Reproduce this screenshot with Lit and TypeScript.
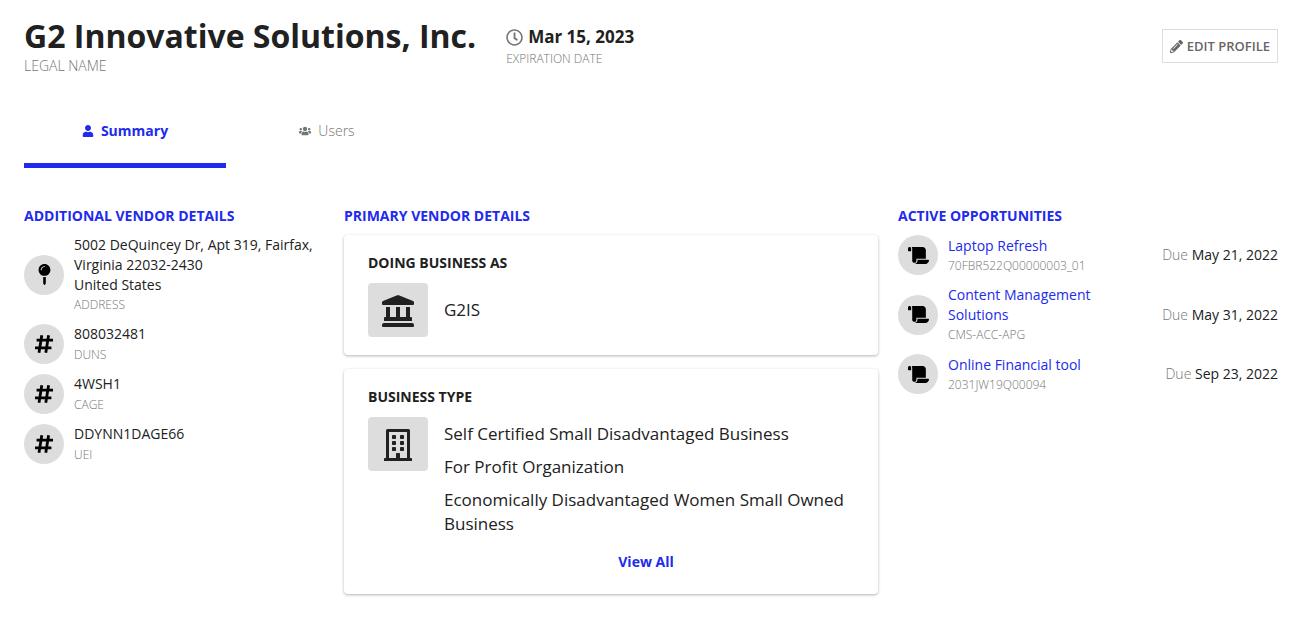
import { LitElement, html, css, svg } from "lit";
import { customElement, state } from "lit/decorators.js";

const icons = {
  user: svg`<svg viewBox="0 0 448 512" aria-hidden="true"><path d="M224 256c70.7 0 128-57.3 128-128S294.7 0 224 0 96 57.3 96 128s57.3 128 128 128zm89.6 32h-16.7c-22.2 10.2-46.9 16-72.9 16s-50.6-5.8-72.9-16h-16.7C60.2 288 0 348.2 0 422.4V464c0 26.5 21.5 48 48 48h352c26.5 0 48-21.5 48-48v-41.6c0-74.2-60.2-134.4-134.4-134.4z"/></svg>`,
  users: svg`<svg viewBox="0 0 640 512" aria-hidden="true"><path d="M96 224c35.3 0 64-28.7 64-64s-28.7-64-64-64-64 28.7-64 64 28.7 64 64 64zm448 0c35.3 0 64-28.7 64-64s-28.7-64-64-64-64 28.7-64 64 28.7 64 64 64zm32 32h-64c-17.6 0-33.5 7.1-45.1 18.6 40.3 22.1 68.9 62 75.1 109.4h66c17.7 0 32-14.3 32-32v-32c0-35.3-28.7-64-64-64zm-256 0c61.9 0 112-50.1 112-112S381.9 32 320 32 208 82.1 208 144s50.1 112 112 112zm76.8 32h-8.3c-20.8 10-43.9 16-68.5 16s-47.6-6-68.5-16h-8.3C179.6 288 128 339.6 128 403.2V432c0 26.5 21.5 48 48 48h288c26.5 0 48-21.5 48-48v-28.8c0-63.6-51.6-115.2-115.2-115.2zm-223.7-13.4C161.5 263.1 145.6 256 128 256H64c-35.3 0-64 28.7-64 64v32c0 17.7 14.3 32 32 32h65.9c6.3-47.4 34.9-87.3 75.2-109.4z"/></svg>`,
  clock: svg`<svg viewBox="0 0 512 512" aria-hidden="true"><path d="M256 8C119 8 8 119 8 256s111 248 248 248 248-111 248-248S393 8 256 8zm0 448c-110.5 0-200-89.5-200-200S145.5 56 256 56s200 89.5 200 200-89.5 200-200 200zm61.8-104.4l-84.9-61.7c-3.1-2.3-4.9-5.9-4.9-9.7V116c0-6.6 5.4-12 12-12h32c6.6 0 12 5.4 12 12v141.7l66.8 48.6c5.4 3.9 6.5 11.4 2.6 16.8L334.6 349c-3.9 5.3-11.4 6.5-16.8 2.6z"/></svg>`,
  pencil: svg`<svg viewBox="0 0 512 512" aria-hidden="true"><path d="M497.9 142.1l-46.1 46.1c-4.7 4.7-12.3 4.7-17 0l-111-111c-4.7-4.7-4.7-12.3 0-17l46.1-46.1c18.7-18.7 49.1-18.7 67.9 0l60.1 60.1c18.8 18.7 18.8 49.1 0 67.9zM284.2 99.8L21.6 362.4.4 483.9c-2.9 16.4 11.4 30.6 27.8 27.8l121.5-21.3 262.6-262.6c4.7-4.7 4.7-12.3 0-17l-111-111c-4.8-4.7-12.4-4.7-17.1 0zM124.1 339.9c-5.5-5.5-5.5-14.3 0-19.8l154-154c5.5-5.5 14.3-5.5 19.8 0s5.5 14.3 0 19.8l-154 154c-5.5 5.5-14.3 5.5-19.8 0zM88 424h48v36.3l-64.5 11.3-31.1-31.1L51.7 376H88v48z"/></svg>`,
  pin: svg`<svg viewBox="0 0 288 512" aria-hidden="true"><path d="M112 316.94v156.69l22.02 33.02c4.75 7.12 15.22 7.12 19.97 0L176 473.63V316.94c-10.39 1.92-21.06 3.06-32 3.06s-21.61-1.14-32-3.06zM144 0C64.47 0 0 64.47 0 144s64.47 144 144 144 144-64.47 144-144S223.53 0 144 0zm0 76c-37.5 0-68 30.5-68 68 0 6.62-5.38 12-12 12s-12-5.38-12-12c0-50.73 41.28-92 92-92 6.62 0 12 5.38 12 12s-5.38 12-12 12z"/></svg>`,
  hash: svg`<svg viewBox="0 0 21 21" aria-hidden="true"><path d="M7.800 1.300 5 18.700M14.600 1.300l-2.800 17.400M2.600 6.200h16.400M1 13.800h16.400" fill="none" stroke="currentColor" stroke-width="2.800"/></svg>`,
  scroll: svg`<svg viewBox="0 0 640 512" aria-hidden="true"><path d="M48 0C21.53 0 0 21.53 0 48v64c0 8.84 7.16 16 16 16h80V48C96 21.53 74.47 0 48 0zm208 412.57V352h288V96c0-52.94-43.06-96-96-96H111.59C121.74 13.41 128 29.92 128 48v368c0 38.87 34.65 69.65 74.75 63.12C234.22 474 256 444.46 256 412.57zM288 384v32c0 52.93-43.06 96-96 96h336c61.86 0 112-50.14 112-112 0-8.84-7.16-16-16-16H288z"/></svg>`,
  bank: svg`<svg viewBox="0 0 32 32" aria-hidden="true"><path d="M1 6 15.200.3a2 2 0 0 1 1.600 0L31 6a1.600 1.600 0 0 1 1 1.500V9a1 1 0 0 1-1 1H1a1 1 0 0 1-1-1V7.500A1.600 1.600 0 0 1 1 6ZM4 12h4v10h6V12h4v10h6V12h4v10h1a1 1 0 0 1 1 1v3H2v-3a1 1 0 0 1 1-1h1ZM2 28h28a2 2 0 0 1 2 2v1a1 1 0 0 1-1 1H1a1 1 0 0 1-1-1v-1a2 2 0 0 1 2-2Z"/></svg>`,
  building: svg`<svg viewBox="0 0 32 32" aria-hidden="true"><path fill-rule="evenodd" d="M5.500 0h21A1.500 1.500 0 0 1 28 1.500V29h1.200a.8.8 0 0 1 .8.8V32H2v-2.200a.8.8 0 0 1 .8-.8H4V1.500A1.500 1.500 0 0 1 5.500 0ZM7 3v26h7v-4.200a.8.8 0 0 1 .8-.8h2.400a.8.8 0 0 1 .8.8V29h7V3Z"/><g><rect x="10" y="6" width="4" height="4" rx=".8"/><rect x="18" y="6" width="4" height="4" rx=".8"/><rect x="10" y="12" width="4" height="4" rx=".8"/><rect x="18" y="12" width="4" height="4" rx=".8"/><rect x="10" y="18" width="4" height="4" rx=".8"/><rect x="18" y="18" width="4" height="4" rx=".8"/></g></svg>`,
};

const details = [
  {
    icon: "pin",
    lines: ["5002 DeQuincey Dr, Apt 319, Fairfax, Virginia 22032-2430", "United States"],
    label: "Address",
  },
  { icon: "hash", lines: ["808032481"], label: "DUNS" },
  { icon: "hash", lines: ["4WSH1"], label: "CAGE" },
  { icon: "hash", lines: ["DDYNN1DAGE66"], label: "UEI" },
];

const businessTypes = [
  "Self Certified Small Disadvantaged Business",
  "For Profit Organization",
  "Economically Disadvantaged Women Small Owned Business",
];

const opportunities = [
  { title: "Laptop Refresh", number: "70FBR522Q00000003_01", due: "May 21, 2022" },
  { title: "Content Management Solutions", number: "CMS-ACC-APG", due: "May 31, 2022" },
  { title: "Online Financial tool", number: "2031JW19Q00094", due: "Sep 23, 2022" },
];

@customElement("app-root")
export class AppRoot extends LitElement {
  @state() private tab = "summary";

  static styles = css`
    :host {
      display: block;
      box-sizing: border-box;
      padding: 16px 23px 24px 24px;
      background: #fff;
      color: #212121;
      font: 400 14px/20px "Open Sans", "Noto Sans", sans-serif;
    }
    h1, h2, h3, p, ul { margin: 0; padding: 0; }
    ul { list-style: none; }
    svg { display: block; fill: currentColor; flex: none; }
    a { color: #212aed; text-decoration: none; }
    button { font: inherit; margin: 0; cursor: pointer; background: none; }

    .header { display: flex; align-items: flex-start; gap: 30px; }
    .name { font-size: 32px; line-height: 40px; font-weight: 700; }
    .muted { color: #757575; font-weight: 300; text-transform: uppercase; }
    .name-label { line-height: 20px; }
    .expiration { padding-top: 9px; }
    .date { display: flex; align-items: center; gap: 5px; font-size: 17px; line-height: 24px; font-weight: 700; }
    .date svg { width: 17px; height: 17px; color: #757575; }
    .small { font-size: 12px; line-height: 19px; }
    .edit {
      display: flex; align-items: center; gap: 4px;
      margin: 13px 0 0 auto; padding: 0 7px; height: 34px;
      border: 1px solid #ddd; color: #666;
      font-size: 13px; font-weight: 600; text-transform: uppercase;
    }
    .edit svg { width: 13px; height: 13px; }

    .tabs { display: flex; margin-top: 18px; }
    .tab {
      display: flex; align-items: center; justify-content: center; gap: 7px;
      box-sizing: border-box; width: 202px; height: 74px; padding: 4px 0 0;
      border: 0; border-bottom: 5px solid transparent;
      color: #757575; font-weight: 300;
    }
    .tab.active { border-bottom-color: #212aed; color: #212aed; font-weight: 700; }
    .tab svg { width: 12px; height: 12px; }

    .columns {
      display: grid; grid-template-columns: 300fr 534fr 380fr;
      gap: 20px; align-items: start; margin-top: 38px;
    }
    .heading { margin-bottom: 9px; color: #212aed; font-size: 14px; line-height: 20px; font-weight: 700; text-transform: uppercase; }
    .list { display: flex; flex-direction: column; gap: 10px; }
    .item { display: flex; align-items: center; gap: 10px; }
    .circle {
      display: flex; align-items: center; justify-content: center; flex: none;
      width: 40px; height: 40px; border-radius: 50%; background: #ddd; color: #000;
    }
    .circle svg { width: 21px; height: 21px; }
    .body { flex: 1; min-width: 0; }
    .detail { display: flex; flex-direction: column; justify-content: space-between; align-self: stretch; }
    .body a { display: block; max-width: 160px; }
    .due .muted { text-transform: none; }

    .cards { display: flex; flex-direction: column; gap: 14px; }
    .card {
      padding: 18px 24px; border-radius: 4px; background: #fff;
      box-shadow: 0 1px 3px rgba(0, 0, 0, 0.3);
    }
    .card-title { margin-bottom: 10px; font-size: 14px; line-height: 20px; font-weight: 700; text-transform: uppercase; }
    .row { display: flex; align-items: flex-start; gap: 16px; }
    .row.centered { align-items: center; }
    .tile {
      display: flex; align-items: center; justify-content: center; flex: none;
      box-sizing: border-box; width: 60px; height: 54px; padding-top: 2px;
      border-radius: 4px; background: #ddd;
    }
    .tile svg { width: 32px; height: 32px; }
    .value { font-size: 17px; line-height: 24px; }
    .types { flex: 1; padding: 5px 6px 4px 0; }
    .types ul { display: flex; flex-direction: column; gap: 9px; }
    .view-all { display: block; width: fit-content; margin: 16px auto 0; font-weight: 700; }
  `;

  private tabButton(id: string, label: string, icon: unknown) {
    const active = this.tab === id;
    return html`<button
      class="tab ${active ? "active" : ""}"
      role="tab"
      aria-selected=${active ? "true" : "false"}
      @click=${() => (this.tab = id)}
    >${icon}<span>${label}</span></button>`;
  }

  render() {
    return html`
      <header class="header">
        <div>
          <h1 class="name">G2 Innovative Solutions, Inc.</h1>
          <p class="muted name-label">Legal name</p>
        </div>
        <div class="expiration">
          <p class="date">${icons.clock}<span>Mar 15, 2023</span></p>
          <p class="muted small">Expiration date</p>
        </div>
        <button class="edit">${icons.pencil}<span>Edit profile</span></button>
      </header>

      <nav class="tabs" role="tablist">
        ${this.tabButton("summary", "Summary", icons.user)}
        ${this.tabButton("users", "Users", icons.users)}
      </nav>

      <main class="columns">
        <section>
          <h2 class="heading">Additional vendor details</h2>
          <ul class="list">
            ${details.map((d) => html`<li class="item">
              <span class="circle">${icons[d.icon]}</span>
              <div class="body detail">
                <div>${d.lines.map((line) => html`<p>${line}</p>`)}</div>
                <p class="muted small">${d.label}</p>
              </div>
            </li>`)}
          </ul>
        </section>

        <section>
          <h2 class="heading">Primary vendor details</h2>
          <div class="cards">
            <article class="card">
              <h3 class="card-title">Doing business as</h3>
              <div class="row centered">
                <span class="tile">${icons.bank}</span>
                <p class="value">G2IS</p>
              </div>
            </article>
            <article class="card">
              <h3 class="card-title">Business type</h3>
              <div class="row">
                <span class="tile">${icons.building}</span>
                <div class="types">
                  <ul>
                    ${businessTypes.map((t) => html`<li class="value">${t}</li>`)}
                  </ul>
                  <a class="view-all" href="#">View All</a>
                </div>
              </div>
            </article>
          </div>
        </section>

        <section>
          <h2 class="heading">Active opportunities</h2>
          <ul class="list">
            ${opportunities.map((o) => html`<li class="item">
              <span class="circle">${icons.scroll}</span>
              <div class="body">
                <a href="#">${o.title}</a>
                <p class="muted small">${o.number}</p>
              </div>
              <p class="due"><span class="muted">Due</span> ${o.due}</p>
            </li>`)}
          </ul>
        </section>
      </main>
    `;
  }
}
